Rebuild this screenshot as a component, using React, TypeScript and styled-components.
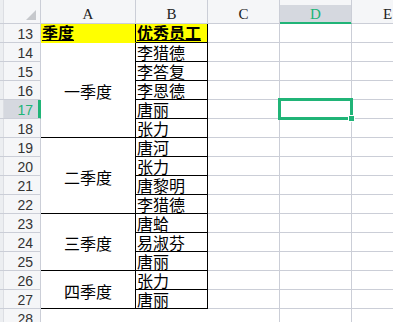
import * as React from 'react';
import styled, { createGlobalStyle, css } from 'styled-components';

const GREEN = '#20b477';
const GRID = '#cbced7';
const HEAD_BG = '#f5f6f8';
const HEAD_ACTIVE = '#d5d8df';

type Group = { label: string; names: string[] };

const groups: Group[] = [
  { label: '一季度', names: ['李猎德', '李答复', '李恩德', '唐丽', '张力'] },
  { label: '二季度', names: ['唐河', '张力', '唐黎明', '李猎德'] },
  { label: '三季度', names: ['唐蛤', '易淑芬', '唐丽'] },
  { label: '四季度', names: ['张力', '唐丽'] },
];

const columns = ['A', 'B', 'C', 'D', 'E'];
const activeCol = 'D';
const activeRow = 17;
const firstRow = 13;

export default function App() {
  const names = groups.flatMap((g) => g.names);
  const rowNumbers = Array.from({ length: 16 }, (_, i) => firstRow + i);

  let gridRow = 3;

  return (
    <>
      <GlobalStyle />
      <StyledSheet>
        <StyledCorner>
          <StyledCornerMark />
        </StyledCorner>
        {columns.map((c) => (
          <StyledColHead key={c} $active={c === activeCol}>
            {c}
          </StyledColHead>
        ))}

        {rowNumbers.map((n, i) => (
          <StyledRowHead key={n} $active={n === activeRow} style={{ gridRow: i + 2 }}>
            {n}
          </StyledRowHead>
        ))}

        {/* row 13 header */}
        <StyledTitleCell $col={2} $row={2}>
          <span>季度</span>
        </StyledTitleCell>
        <StyledTitleCell $col={3} $row={2} $boxed>
          <span>优秀员工</span>
        </StyledTitleCell>

        {groups.map((g) => {
          const start = gridRow;
          gridRow += g.names.length;
          return (
            <StyledQuarter key={g.label} style={{ gridRow: `${start} / span ${g.names.length}` }}>
              {g.label}
            </StyledQuarter>
          );
        })}

        {names.map((name, i) => (
          <StyledName key={i} style={{ gridRow: i + 3 }}>
            {name}
          </StyledName>
        ))}

        {/* row 28 */}
        <StyledCell style={{ gridRow: 18, gridColumn: 2 }} />
        <StyledCell style={{ gridRow: 18, gridColumn: 3 }} />

        {rowNumbers.map((n, i) =>
          [4, 5, 6].map((col) => (
            <StyledCell key={`${n}-${col}`} style={{ gridRow: i + 2, gridColumn: col }} />
          ))
        )}

        <StyledSelection>
          <StyledHandle />
        </StyledSelection>
      </StyledSheet>
    </>
  );
}

const GlobalStyle = createGlobalStyle`
  html, body {
    margin: 0;
    padding: 0;
    background: #ffffff;
    overflow: hidden;
  }
  body {
    width: 393px;
    height: 322px;
  }
`;

const StyledSheet = styled.div`
  position: relative;
  display: grid;
  grid-template-columns: 41px 95px 72px 72px 72px 72px;
  grid-template-rows: 24px repeat(16, 19px);
  width: 424px;
  font-family: 'Noto Sans CJK SC', 'Noto Sans', sans-serif;
  color: #000;
`;

const cellBase = css`
  box-sizing: border-box;
  border-right: 1px solid ${GRID};
  border-bottom: 1px solid ${GRID};
`;

const StyledCorner = styled.div`
  ${cellBase};
  position: relative;
  background: ${HEAD_BG};
  box-shadow: inset 3px 0 0 #eceef1, inset 4px 0 0 #dcdee3;
`;

const StyledCornerMark = styled.div`
  position: absolute;
  right: 4px;
  bottom: 3px;
  width: 0;
  height: 0;
  border-left: 10px solid transparent;
  border-bottom: 10px solid #c6c8cc;
`;

const StyledColHead = styled.div<{ $active?: boolean }>`
  ${cellBase};
  display: flex;
  align-items: center;
  justify-content: center;
  padding-top: 5px;
  background: ${HEAD_BG};
  font-family: 'Liberation Serif', 'DejaVu Serif', serif;
  font-size: 15px;
  color: #222;

  ${(p) =>
    p.$active &&
    css`
      color: ${GREEN};
      background: linear-gradient(${HEAD_BG} 0 5px, ${HEAD_ACTIVE} 5px);
      box-shadow: inset 0 -1px 0 ${GREEN};
      border-bottom-color: ${GREEN};
    `}
`;

const StyledRowHead = styled.div<{ $active?: boolean }>`
  ${cellBase};
  grid-column: 1;
  display: flex;
  align-items: center;
  justify-content: flex-end;
  padding: 1px 7px 0 0;
  background: ${HEAD_BG};
  font-family: 'Liberation Sans', Arial, sans-serif;
  font-size: 14px;
  line-height: 16px;
  color: #333;
  box-shadow: inset 3px 0 0 #eceef1, inset 4px 0 0 #dcdee3;

  ${(p) =>
    p.$active &&
    css`
      background: ${HEAD_ACTIVE};
      color: ${GREEN};
      border-right-color: ${GREEN};
      box-shadow: inset 3px 0 0 #eceef1, inset 4px 0 0 #dcdee3, inset -2px 0 0 ${GREEN};
    `}
`;

const StyledCell = styled.div`
  ${cellBase};
`;

const StyledTitleCell = styled.div<{ $col: number; $row: number; $boxed?: boolean }>`
  ${cellBase};
  grid-column: ${(p) => p.$col};
  grid-row: ${(p) => p.$row};
  display: flex;
  align-items: flex-end;
  padding: 0 0 1px 1px;
  background: #ffff00;
  border-right-color: #000;
  border-bottom-color: ${(p) => (p.$boxed ? '#000' : 'transparent')};
  font-size: 16px;
  font-weight: 700;
  line-height: 17px;
  white-space: nowrap;

  span {
    text-decoration: underline;
    text-decoration-thickness: 1px;
    text-underline-offset: 1px;
  }
`;

const StyledQuarter = styled.div`
  ${cellBase};
  grid-column: 2;
  display: flex;
  align-items: center;
  justify-content: center;
  padding-top: 2px;
  border-right-color: #000;
  border-bottom-color: #000;
  font-size: 16px;
  line-height: 18px;
`;

const StyledName = styled.div`
  ${cellBase};
  grid-column: 3;
  display: flex;
  align-items: flex-end;
  padding: 0 0 0 1px;
  border-right-color: #000;
  border-bottom-color: #000;
  font-size: 16px;
  line-height: 17px;
  white-space: nowrap;
`;

const StyledSelection = styled.div`
  position: absolute;
  left: 278px;
  top: 98px;
  width: 75px;
  height: 22px;
  box-sizing: border-box;
  border: 3px solid ${GREEN};
  pointer-events: none;
`;

const StyledHandle = styled.div`
  position: absolute;
  right: -5px;
  bottom: -5px;
  width: 7px;
  height: 7px;
  box-sizing: border-box;
  background: ${GREEN};
  border: 1px solid #fff;
`;
